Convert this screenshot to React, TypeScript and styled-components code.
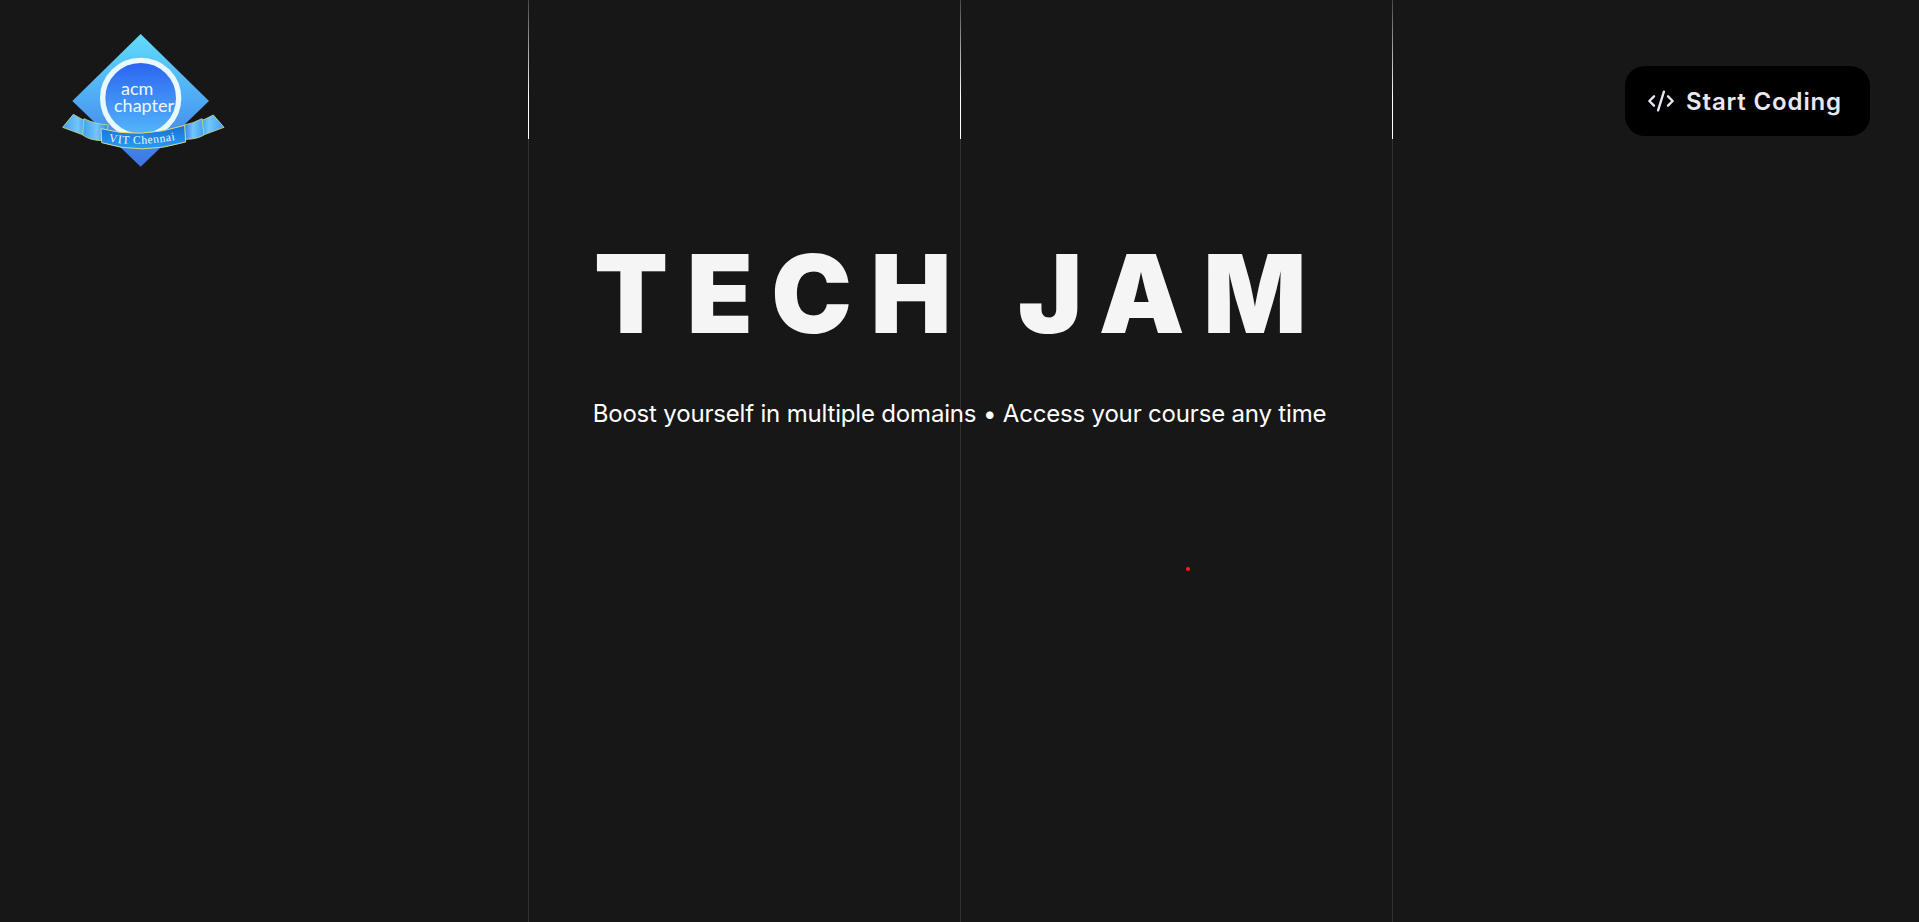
import React from "react";
import styled, { createGlobalStyle } from "styled-components";
import { CodeXml } from "lucide-react";

const Global = createGlobalStyle`
  html, body { margin: 0; padding: 0; background: #171717; }
  body { font-family: Inter, "Noto Sans", sans-serif; overflow: hidden; }
`;

const Page = styled.div`
  position: relative;
  height: 922px;
  background: #171717;
  overflow: hidden;
`;

const Rails = styled.div`
  position: absolute;
  inset: 0;
  display: flex;
  justify-content: center;
  padding-left: 2px;
  pointer-events: none;
`;

const Rail = styled.div`
  position: relative;
  width: 432px;
  border-left: 1px solid #333333;
  box-sizing: border-box;
  &:last-child { width: 1px; }
  &::after {
    content: "";
    position: absolute;
    left: -1px;
    top: 0;
    width: 1px;
    height: 139px;
    background: linear-gradient(to bottom, rgba(255,255,255,0.1), #ffffff 70%);
  }
`;

const Header = styled.header`
  position: relative;
  display: flex;
  align-items: flex-start;
  justify-content: space-between;
  padding: 32px 49px 0 60px;
`;

const Logo = styled.svg`
  display: block;
  width: 166px;
  height: 138px;
`;

const CodeButton = styled.button`
  display: flex;
  align-items: center;
  gap: 11px;
  margin-top: 34px;
  width: 245px;
  height: 70px;
  padding: 0 0 0 22px;
  border: 0;
  border-radius: 20px;
  background: #000000;
  color: #e8e8f2;
  font: 600 24px Inter, sans-serif;
  letter-spacing: 0.85px;
`;

const Hero = styled.main`
  position: relative;
  display: flex;
  flex-direction: column;
  align-items: center;
  margin-top: 59px;
`;

const Title = styled.h1`
  margin: 0;
  font: 900 108px/130px Inter, sans-serif;
  letter-spacing: 18.5px;
  word-spacing: 8px;
  color: #f5f5f5;
  white-space: nowrap;
`;

const Subtitle = styled.p`
  margin: 37px 0 0;
  font: 400 24px/36px Inter, sans-serif;
  letter-spacing: -0.18px;
  color: #ffffff;
  white-space: nowrap;
`;

const Dot = styled.span`
  position: absolute;
  left: 1186px;
  top: 567px;
  width: 4px;
  height: 4px;
  border-radius: 50%;
  background: #ff1a22;
`;

const AcmLogo = () => (
  <Logo viewBox="60 36 498 414">
    <defs>
      <linearGradient id="dia" x1="0" y1="0" x2="0" y2="1">
        <stop offset="0" stopColor="#5fdcfb" />
        <stop offset="0.5" stopColor="#4fa9f4" />
        <stop offset="1" stopColor="#3d74e4" />
      </linearGradient>
      <linearGradient id="disc" x1="0" y1="0" x2="0" y2="1">
        <stop offset="0" stopColor="#2a62f0" />
        <stop offset="1" stopColor="#55b8fa" />
      </linearGradient>
      <linearGradient id="rib" x1="0" y1="0" x2="0" y2="1">
        <stop offset="0" stopColor="#1670d8" />
        <stop offset="1" stopColor="#2a9df0" />
      </linearGradient>
      <linearGradient id="tailL" x1="0" y1="0" x2="1" y2="0">
        <stop offset="0" stopColor="#3f9ff0" />
        <stop offset="0.55" stopColor="#74c6fb" />
        <stop offset="1" stopColor="#2b84e2" />
      </linearGradient>
      <linearGradient id="tailR" x1="1" y1="0" x2="0" y2="0">
        <stop offset="0" stopColor="#3f9ff0" />
        <stop offset="0.55" stopColor="#74c6fb" />
        <stop offset="1" stopColor="#2b84e2" />
      </linearGradient>
      <path id="ribbonLine" d="M204 364 Q302 384 432 354" />
    </defs>
    <polygon points="302,42 507,243 302,440 97,243" fill="url(#dia)" />
    <circle cx="302" cy="235" r="114" fill="url(#disc)" stroke="#eaf8ff" strokeWidth="16" />
    <text fontFamily="Lato, sans-serif" fontSize="54" fill="#eef7fd">
      <tspan x="243" y="225">acm</tspan>
      <tspan x="222" y="277">chapter</tspan>
    </text>
    <path d="M68 322 L100 283 Q128 302 150 305 L130 345 Z" fill="url(#tailL)" stroke="#c9d88a" strokeWidth="2.5" />
    <path d="M132 296 Q165 312 205 315 L190 362 Q150 362 128 345 Z" fill="url(#tailL)" stroke="#c9d88a" strokeWidth="2.5" />
    <path d="M552 322 L520 285 Q495 300 470 305 L490 345 Z" fill="url(#tailR)" stroke="#c9d88a" strokeWidth="2.5" />
    <path d="M486 296 Q460 310 432 315 L437 358 Q470 358 492 345 Z" fill="url(#tailR)" stroke="#c9d88a" strokeWidth="2.5" />
    <path d="M183 326 Q300 358 434 316 L437 366 Q305 406 185 368 Z" fill="url(#rib)" stroke="#d8dc7a" strokeWidth="3" />
    <text fontFamily="Liberation Serif, serif" fontSize="35" letterSpacing="1.8" fill="#eef8ff">
      <textPath href="#ribbonLine" startOffset="2">VIT Chennai</textPath>
    </text>
  </Logo>
);

export default function App() {
  return (
    <Page>
      <Global />
      <Rails>
        <Rail />
        <Rail />
        <Rail />
      </Rails>
      <Header>
        <AcmLogo />
        <CodeButton>
          <CodeXml size={28} strokeWidth={2} />
          Start Coding
        </CodeButton>
      </Header>
      <Hero>
        <Title>TECH JAM</Title>
        <Subtitle>Boost yourself in multiple domains • Access your course any time</Subtitle>
      </Hero>
      <Dot />
    </Page>
  );
}
